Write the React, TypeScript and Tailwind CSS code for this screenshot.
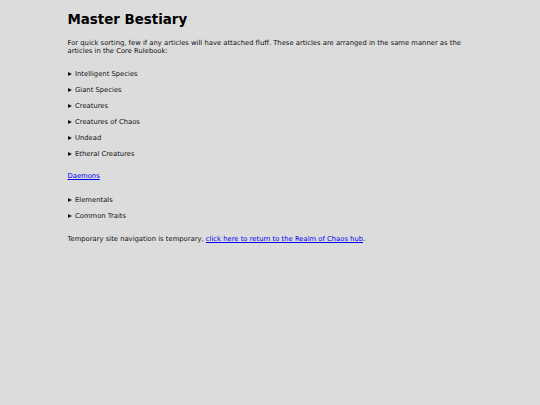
import React from "react";

const items1 = ["Intelligent Species", "Giant Species", "Creatures", "Creatures of Chaos", "Undead", "Etheral Creatures"];
const items2 = ["Elementals", "Common Traits"];

function Item({ label }: { label: string }) {
  return (
    <div className="flex items-center h-[8px] gap-[3.5px]">
      <svg width="4" height="4" viewBox="0 0 4 4" className="block shrink-0 mb-[1px]">
        <path d="M0 0 L4 2 L0 4 Z" fill="#111" />
      </svg>
      <span className="leading-[8px]">{label}</span>
    </div>
  );
}

export default function App() {
  return (
    <div className="min-h-[405px] w-full bg-[#dcdcdc] text-[#111]" style={{ fontFamily: '"DejaVu Sans", Verdana, sans-serif' }}>
      <div className="w-[75%] mx-auto pt-[11px] text-[6.8px] leading-[7.6px]">
        <h1 className="text-[13.4px] font-bold leading-[18px] text-black">Master Bestiary</h1>
        <p className="mt-[11px]">
          For quick sorting, few if any articles will have attached fluff. These articles are arranged in the same manner as the articles in the Core Rulebook:
        </p>
        <div className="mt-[15px] flex flex-col gap-[8px]">
          {items1.map((l) => (
            <Item key={l} label={l} />
          ))}
        </div>
        <div className="mt-[15px] h-[8px] flex items-center">
          <a href="#" className="text-[#0000ee] underline">Daemons</a>
        </div>
        <div className="mt-[15px] flex flex-col gap-[8px]">
          {items2.map((l) => (
            <Item key={l} label={l} />
          ))}
        </div>
        <p className="mt-[16px]">
          Temporary site navigation is temporary,{" "}
          <a href="#" className="text-[#0000ee] underline">click here to return to the Realm of Chaos hub</a>.
        </p>
      </div>
    </div>
  );
}
